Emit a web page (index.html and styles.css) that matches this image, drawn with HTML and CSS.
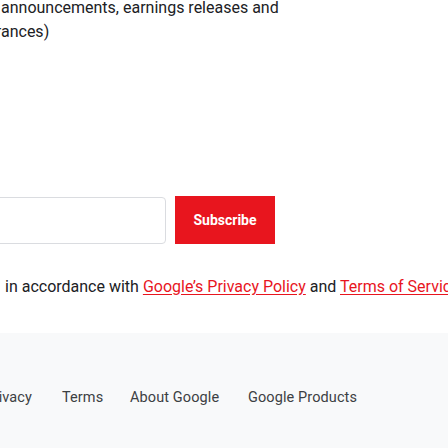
FILE: index.html
```html
<!DOCTYPE html>
<html lang="en">
<head>
<meta charset="utf-8">
<title>Subscribe</title>
<link rel="stylesheet" href="styles.css">
</head>
<body>
<main class="page">
  <p class="intro">announcements, earnings releases and<br>appearances)</p>
  <form class="signup" onsubmit="return false">
    <input class="email" type="email" aria-label="Email address">
    <button class="subscribe" type="submit">Subscribe</button>
  </form>
  <p class="consent">in accordance with <a href="#">Google’s Privacy Policy</a> and <a href="#">Terms of Service</a>.</p>
</main>
<footer class="footer">
  <nav class="footer-links">
    <a class="first" href="#">Privacy</a>
    <a href="#">Terms</a>
    <a href="#">About Google</a>
    <a href="#">Google Products</a>
  </nav>
</footer>
</body>
</html>
```
FILE: styles.css
```css
html, body {
  margin: 0;
  padding: 0;
  background: #ffffff;
  overflow: hidden;
}
body {
  width: 448px;
  height: 448px;
  font-family: Roboto, "Noto Sans", Arial, sans-serif;
  color: #202124;
}
.page {
  height: 333px;
  display: flex;
  flex-direction: column;
}
.intro {
  margin: -4px 0 0 -48px;
  text-indent: 49px;
  font-size: 16px;
  line-height: 24px;
  white-space: nowrap;
}
.signup {
  display: flex;
  align-items: flex-start;
  gap: 9px;
  margin: 152px 0 0 -134px;
  height: 49px;
}
.email {
  box-sizing: border-box;
  width: 300px;
  height: 47px;
  margin-top: 1px;
  border: 1px solid #dadce0;
  border-radius: 4px;
  background: #fff;
}
.subscribe {
  box-sizing: border-box;
  width: 100px;
  height: 48px;
  border: 0;
  border-radius: 0;
  background: #e8151e;
  color: #fff;
  font-family: Roboto, Arial, sans-serif;
  font-weight: 700;
  font-size: 14px;
  padding: 0;
}
.consent {
  margin: 30px 0 0 5px;
  font-size: 16px;
  line-height: 24px;
  white-space: nowrap;
}
.consent a {
  color: #e8151e;
  text-decoration: underline;
  text-underline-offset: 2px;
}
.footer {
  background: #f8f9fa;
  height: 115px;
  display: flex;
  align-items: center;
}
.footer-links {
  display: grid;
  grid-template-columns: 80px 38px 88px auto;
  column-gap: 30px;
  margin-top: 15px;
  margin-left: -48px;
}
.footer-links a {
  color: #3c4043;
  text-decoration: none;
  font-size: 14.5px;
  letter-spacing: 0.1px;
  line-height: 20px;
  white-space: nowrap;
}
.footer-links .first {
  text-align: right;
}
```
